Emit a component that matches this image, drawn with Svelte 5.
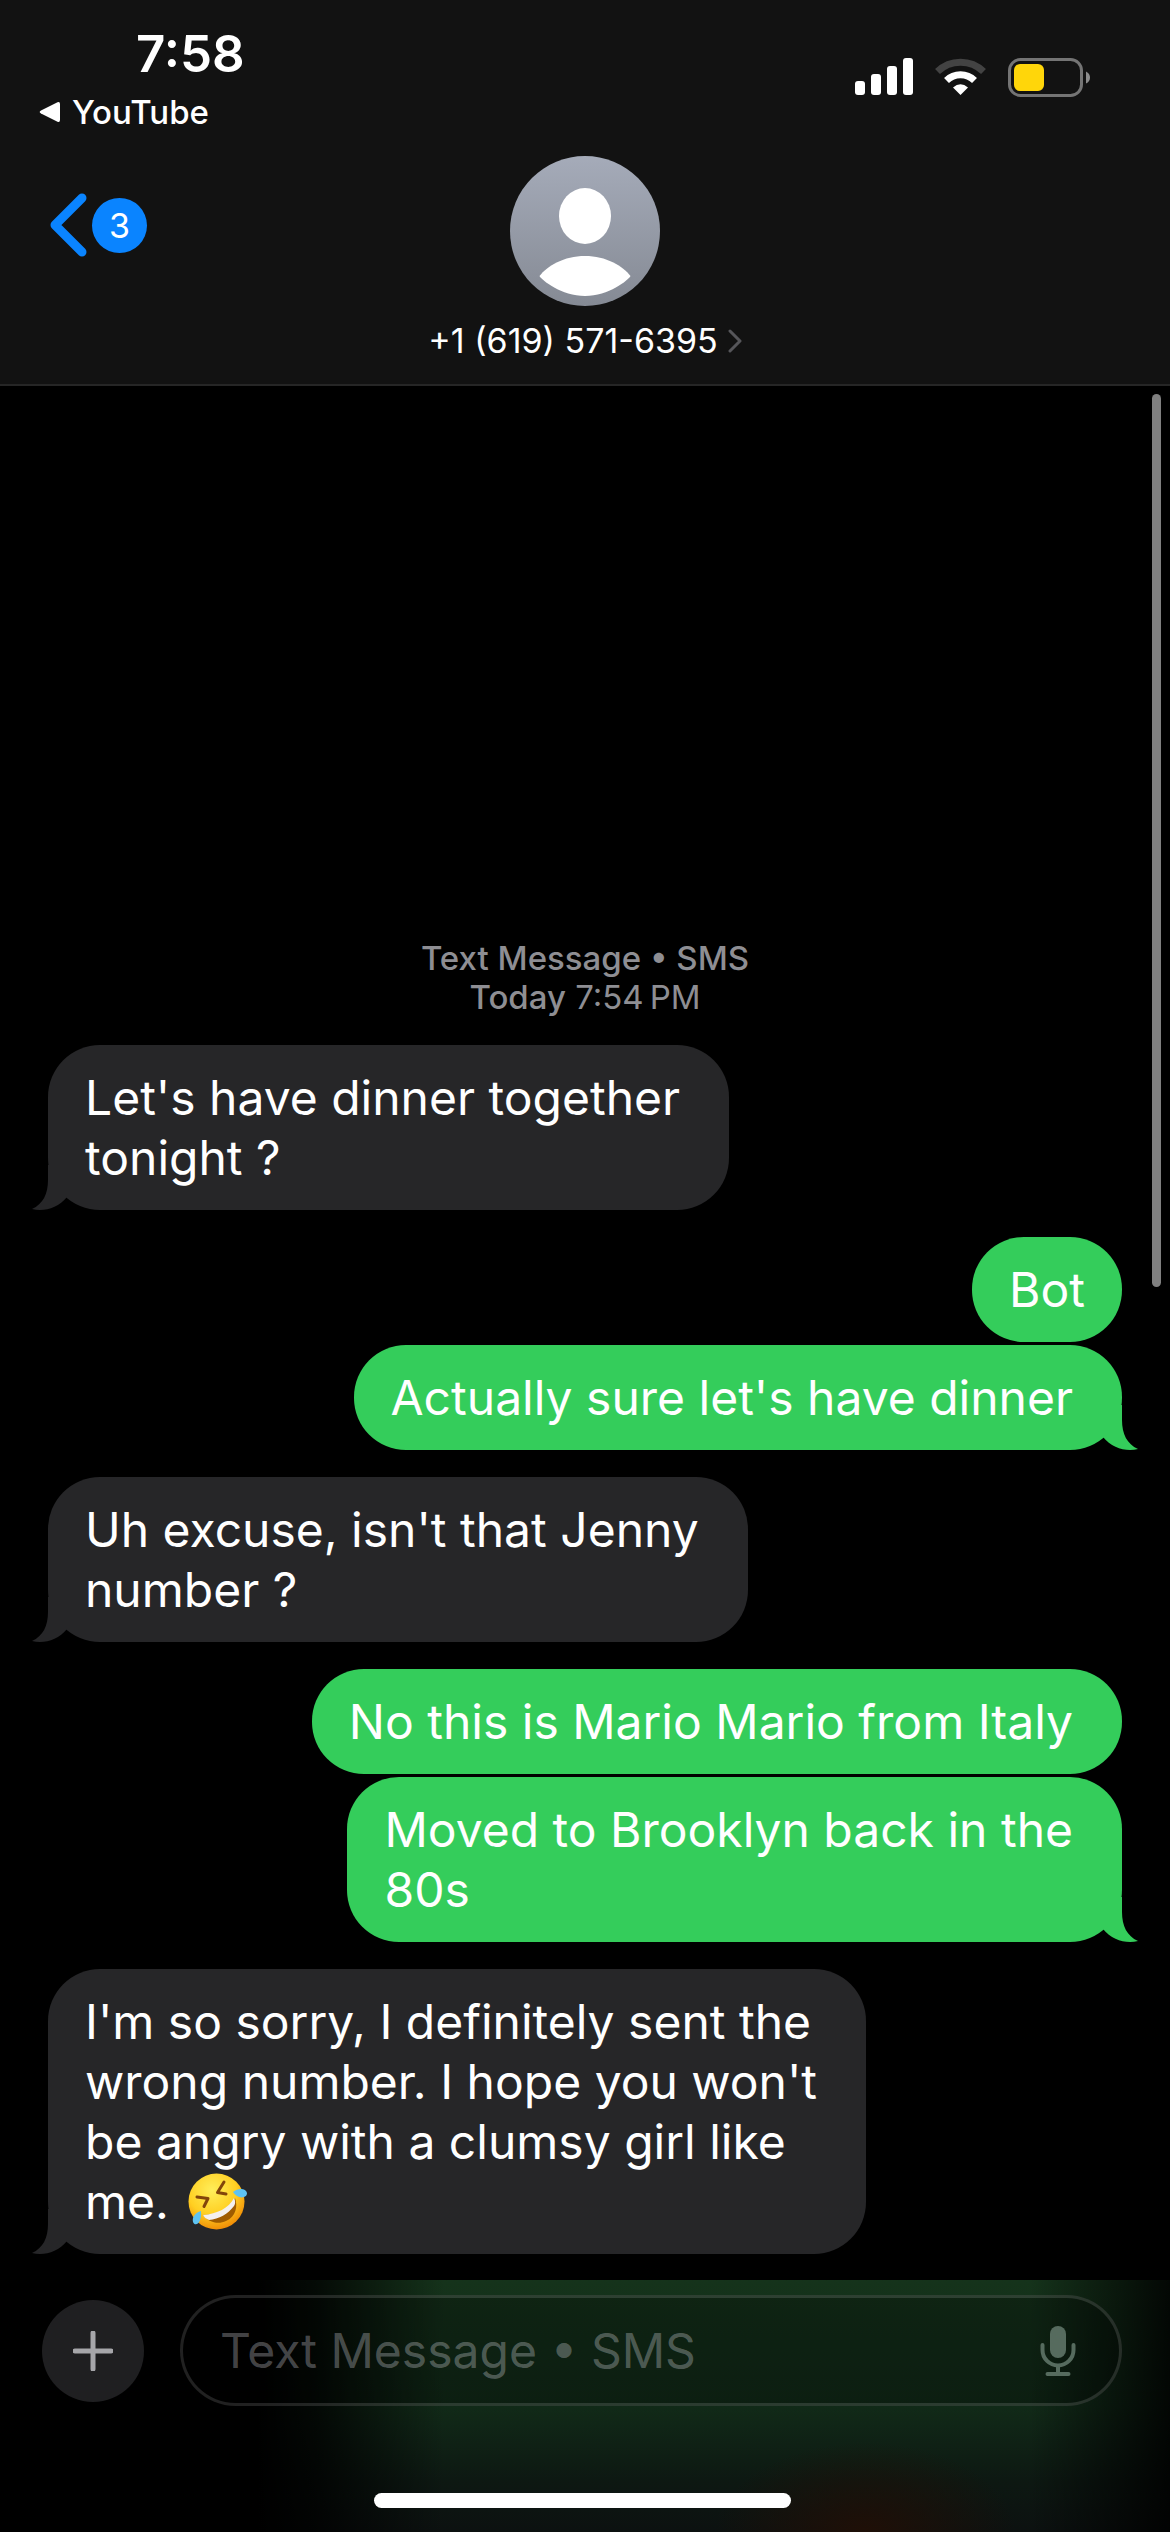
<script lang="ts">
  type Message = { from: 'them' | 'me'; text: string; tail?: boolean; wide?: boolean; emoji?: boolean };

  const groups: Message[][] = [
    [{ from: 'them', text: "Let's have dinner together\ntonight ?", tail: true, wide: true }],
    [
      { from: 'me', text: 'Bot' },
      { from: 'me', text: "Actually sure let's have dinner", tail: true, wide: true }
    ],
    [{ from: 'them', text: "Uh excuse, isn't that Jenny\nnumber ?", tail: true, wide: true }],
    [
      { from: 'me', text: 'No this is Mario Mario from Italy', wide: true },
      { from: 'me', text: 'Moved to Brooklyn back in the\n80s', tail: true, wide: true }
    ],
    [
      {
        from: 'them',
        text: "I'm so sorry, I definitely sent the\nwrong number. I hope you won't\nbe angry with a clumsy girl like\nme. ",
        tail: true,
        wide: true,
        emoji: true
      }
    ]
  ];
</script>

<div class="phone">
  <header>
    <div class="status">
      <div class="clock">
        <time>7:58</time>
        <a class="return" href="#youtube">
          <svg width="22" height="22" viewBox="0 0 22 22" aria-hidden="true"><path d="M2 9.5 18.5 1.2Q21 .2 21 3v16q0 2.800-2.500 1.800L2 12.500q-2.600-1.500 0-3Z" fill="#fff" /></svg>
          YouTube
        </a>
      </div>
      <div class="indicators">
        <svg width="58" height="38" viewBox="0 0 58 38" fill="#fff" aria-label="Signal">
          <rect y="23" width="10" height="14" rx="3" /><rect x="16" y="16" width="10" height="21" rx="3" />
          <rect x="32" y="8" width="10" height="29" rx="3" /><rect x="48" width="10" height="37" rx="3" />
        </svg>
        <svg width="51" height="38" viewBox="0 0 51 38" aria-label="Wi-Fi">
          <path d="M2.500 13.500A33 33 0 0 1 48.500 13.500" fill="none" stroke="#434343" stroke-width="7" />
          <path d="M11.500 22.500A20 20 0 0 1 39.500 22.500" fill="none" stroke="#fff" stroke-width="7" />
          <path d="M18 29.500q7.500-6.500 15 0L25.500 37Z" fill="#fff" />
        </svg>
        <svg width="83" height="39" viewBox="0 0 83 39" aria-label="Battery">
          <rect x="1.500" y="1.500" width="72" height="36" rx="11" fill="none" stroke="#747474" stroke-width="3" />
          <rect x="6" y="6" width="30" height="27" rx="6" fill="#ffd60a" />
          <path d="M78 13.500q4 2 4 6t-4 6Z" fill="#8c8c8c" />
        </svg>
      </div>
    </div>
    <div class="nav">
      <button class="back" aria-label="Back, 3 unread">
        <svg width="37" height="64" viewBox="0 0 37 64" aria-hidden="true"><path d="M32 5 5 32l27 27" fill="none" stroke="#0a84ff" stroke-width="9" stroke-linecap="round" stroke-linejoin="round" /></svg>
        <span class="unread">3</span>
      </button>
      <button class="contact">
        <svg width="150" height="150" viewBox="0 0 150 150" aria-hidden="true">
          <defs><linearGradient id="face" x2="0" y2="1"><stop stop-color="#a5abb9" /><stop offset="1" stop-color="#858a94" /></linearGradient></defs>
          <circle cx="75" cy="75" r="75" fill="url(#face)" />
          <ellipse cx="75" cy="60" rx="26" ry="28" fill="#fff" />
          <path d="M29.500 120C37 110 54 100 75 100s38 10 45.500 20c-2 4-22 20-45.500 20s-43.500-16-45.500-20Z" fill="#fff" />
        </svg>
        <span class="number">
          +1 (619) 571-6395
          <svg width="14" height="24" viewBox="0 0 14 24" aria-hidden="true"><path d="m2 2 10 10L2 22" fill="none" stroke="#56565a" stroke-width="3" stroke-linecap="round" stroke-linejoin="round" /></svg>
        </span>
      </button>
    </div>
  </header>

  <main>
    <div class="scrollbar"></div>
    <p class="stamp"><b>Text Message • SMS</b><br /><b>Today</b> 7:54&thinsp;PM</p>
    {#each groups as group}
      <section>
        {#each group as message}
          <div class="bubble {message.from}" class:wide={message.wide}>
            <p>{message.text}{#if message.emoji}<svg class="emoji" viewBox="0 0 60 58" role="img" aria-label="rolling on the floor laughing">
                  <defs><radialGradient id="skin" cx=".42" cy=".3" r=".72"><stop stop-color="#ffee5a" /><stop offset=".6" stop-color="#ffcf22" /><stop offset="1" stop-color="#f08a05" /></radialGradient></defs>
                  <circle cx="28.500" cy="28.500" r="28" fill="url(#skin)" />
                  <path d="M15 42C29 42 41 36 47 25c3 8 1 19-9 23-8 4-18 1-23-6Z" fill="#a05c00" />
                  <path d="M15 42C29 41 41 35 46 25c1 2 2 5 0 8-6 8-15 13-25 14-3-1-5-3-6-5Z" fill="#f4f0ee" />
                  <path d="m9 24 11 1.500-4 8M36 9l-6.500 10.500L38 21" fill="none" stroke="#83450a" stroke-width="3" stroke-linecap="round" stroke-linejoin="round" />
                  <path d="M45 19c5-4 13-4 14 1 0 6-10 6-14-1ZM13 38c-6 2-9 6-8 11 2 5 9 2 8-11Z" fill="#5ec3f2" />
                </svg>{/if}</p>
            {#if message.tail}
              <svg class="tail" width="40" height="45" viewBox="0 0 40 45" aria-hidden="true"><path d="M16 0v15c0 14-5 24-16 29 12 3 26-1 35-12V0Z" fill="currentColor" /></svg>
            {/if}
          </div>
        {/each}
      </section>
    {/each}
  </main>

  <footer>
    <form onsubmit={(e) => e.preventDefault()}>
      <button class="add" type="button" aria-label="Add attachment">
        <svg width="40" height="40" viewBox="0 0 40 40" aria-hidden="true"><path d="M20 2v36M2 20h36" stroke="#a6a6aa" stroke-width="5" stroke-linecap="round" /></svg>
      </button>
      <div class="field">
        <input type="text" aria-label="Message" placeholder="Text Message • SMS" />
        <button class="mic" type="button" aria-label="Dictate">
          <svg width="36" height="52" viewBox="0 0 36 52" aria-hidden="true">
            <rect x="10" y="1" width="16" height="32" rx="8" fill="#566b5e" />
            <path d="M2.500 20v5a15.500 15.500 0 0 0 31 0v-5M18 41v8M7.500 49h21" fill="none" stroke="#566b5e" stroke-width="4" stroke-linecap="round" />
          </svg>
        </button>
      </div>
    </form>
    <div class="home"></div>
  </footer>
</div>

<style>
  :global(body) { margin: 0; background: #000; }
  .phone { min-height: 100vh; display: flex; flex-direction: column; background: #000; color: #fff; font-family: Inter, "Liberation Sans", sans-serif; }
  button { padding: 0; border: 0; background: none; color: inherit; font: inherit; display: flex; align-items: center; }
  svg { display: block; flex: none; }
  p { margin: 0; }
  header { box-sizing: border-box; height: 386px; background: #121212; border-bottom: 2px solid #262626; }
  .status { display: flex; justify-content: space-between; height: 156px; box-sizing: border-box; padding: 24px 79px 0 39px; }
  .clock { display: flex; flex-direction: column; }
  time { font-size: 51px; line-height: 60px; font-weight: 600; padding-left: 97px; }
  .return { display: flex; align-items: center; gap: 11px; margin-top: 8px; font-size: 33px; line-height: 40px; font-weight: 500; color: #fff; text-decoration: none; }
  .indicators { display: flex; gap: 22px; padding-top: 34px; align-items: flex-start; }
  .nav { display: grid; grid-template-columns: 1fr auto 1fr; align-items: start; padding: 0 50px; }
  .back { gap: 5px; margin-top: 37px; }
  .unread { width: 55px; height: 55px; border-radius: 50%; background: #0a84ff; font-size: 34px; line-height: 55px; text-align: center; }
  .contact { flex-direction: column; }
  .number { display: flex; align-items: center; gap: 10px; margin-top: 15px; font-size: 34px; line-height: 40px; }
  main { position: relative; flex: 1; display: flex; flex-direction: column; justify-content: flex-end; padding: 0 48px 26px; }
  .scrollbar { position: absolute; top: 8px; right: 9px; width: 9px; height: 893px; border-radius: 5px; background: #808080; }
  .stamp { text-align: center; font-size: 33px; line-height: 39px; color: #8e8e93; margin-bottom: 28px; }
  .stamp b { font-weight: 500; }
  section { display: flex; flex-direction: column; gap: 3px; }
  section + section { margin-top: 27px; }
  .bubble { position: relative; padding: 23px 37px 22px; border-radius: 52px; font-size: 48px; line-height: 60px; }
  .them { align-self: flex-start; background: #262628; color: #262628; }
  .me { align-self: flex-end; background: #34cd5b; color: #34cd5b; }
  .bubble p { color: #fff; white-space: pre-wrap; }
  .wide { padding-right: 49px; }
  .tail { position: absolute; bottom: 0; left: -16px; }
  .me .tail { left: auto; right: -16px; transform: scaleX(-1); }
  .emoji { display: inline-block; width: 60px; height: 58px; vertical-align: -4px; margin: -8px 0 -8px 6px; }
  footer {
    display: flex; flex-direction: column; justify-content: space-between; height: 252px; box-sizing: border-box; padding: 15px 48px 24px 42px;
    background:
      radial-gradient(ellipse 150px 90px at 74% 100%, #1f0f07 0%, transparent 100%),
      linear-gradient(90deg, #000 22%, #000c 27%, transparent 38%, transparent 88%, #000 102%),
      linear-gradient(#15331b 0%, #112a18 50%, #0d1812 80%, #0c1110 100%);
  }
  form { display: flex; align-items: center; gap: 36px; }
  .add { width: 102px; height: 102px; border-radius: 50%; background: #1f1f21; justify-content: center; flex: none; }
  .field { flex: 1; display: flex; align-items: center; box-sizing: border-box; height: 111px; padding: 0 43px 0 37px; border: 3px solid rgba(255, 255, 255, 0.13); border-radius: 56px; background: rgba(0, 0, 0, 0.28); }
  input { flex: 1; min-width: 0; padding: 0; border: 0; outline: 0; background: none; color: #fff; font: inherit; font-size: 48px; line-height: 60px; }
  input::placeholder { color: rgba(235, 235, 245, 0.3); opacity: 1; }
  .home { width: 417px; height: 15px; border-radius: 8px; background: #fff; align-self: center; }
</style>
